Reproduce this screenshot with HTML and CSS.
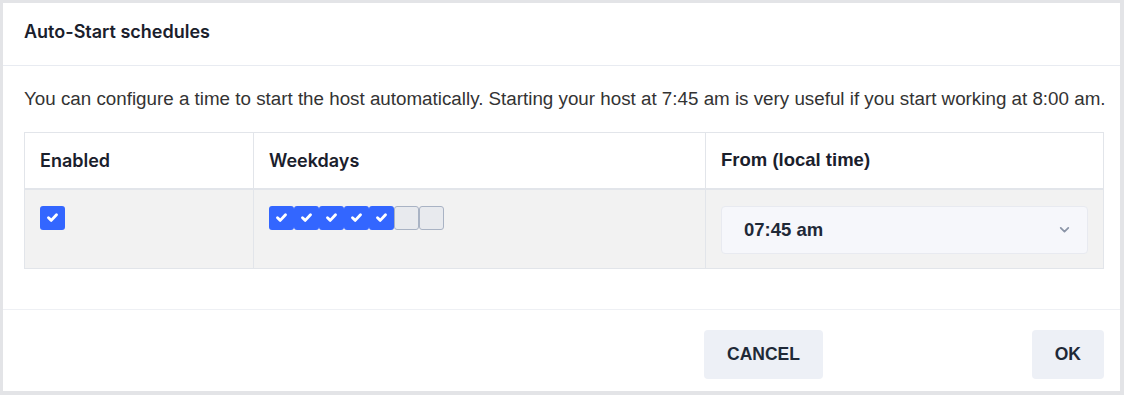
FILE: index.html
```html
<!DOCTYPE html>
<html lang="en">
<head>
    <meta charset="UTF-8">
    <meta name="viewport" content="width=device-width, initial-scale=1.0">
    <title>Auto-Start schedules</title>
    <link rel="stylesheet" href="styles.css">
</head>
<body>
    <div class="dialog">
        <div class="dialog-header">
            <h2>Auto-Start schedules</h2>
        </div>

        <div class="dialog-body">
            <p class="intro">You can configure a time to start the host automatically. Starting your host at 7:45 am is very useful if you start working at 8:00 am.</p>

            <table class="schedules">
                <thead>
                    <tr>
                        <th class="col-enabled">Enabled</th>
                        <th class="col-days">Weekdays</th>
                        <th class="col-from">From (local time)</th>
                    </tr>
                </thead>
                <tbody>
                    <tr>
                        <td>
                            <span class="check on">
                                <svg viewBox="0 0 12 12"><path d="M2.8 6.2 L5 8.3 L9.2 3.8" /></svg>
                            </span>
                        </td>
                        <td>
                            <div class="days">
                                <span class="check on"><svg viewBox="0 0 12 12"><path d="M2.8 6.2 L5 8.3 L9.2 3.8" /></svg></span>
                                <span class="check on"><svg viewBox="0 0 12 12"><path d="M2.8 6.2 L5 8.3 L9.2 3.8" /></svg></span>
                                <span class="check on"><svg viewBox="0 0 12 12"><path d="M2.8 6.2 L5 8.3 L9.2 3.8" /></svg></span>
                                <span class="check on"><svg viewBox="0 0 12 12"><path d="M2.8 6.2 L5 8.3 L9.2 3.8" /></svg></span>
                                <span class="check on"><svg viewBox="0 0 12 12"><path d="M2.8 6.2 L5 8.3 L9.2 3.8" /></svg></span>
                                <span class="check off"></span>
                                <span class="check off"></span>
                            </div>
                        </td>
                        <td>
                            <div class="time-select">
                                <span>07:45 am</span>
                                <svg class="chevron" viewBox="0 0 12 12"><path d="M2.5 4.5 L6 8 L9.5 4.5" /></svg>
                            </div>
                        </td>
                    </tr>
                </tbody>
            </table>
        </div>

        <div class="dialog-footer">
            <button class="btn">CANCEL</button>
            <button class="btn">OK</button>
        </div>
    </div>
</body>
</html>
```

FILE: styles.css
```css
* {
    margin: 0;
    padding: 0;
    box-sizing: border-box;
}

body {
    background-color: #e3e4e7;
    padding: 3px 4px 4px 3px;
    font-family: "Liberation Sans", Arial, sans-serif;
    color: #2d3748;
}

.dialog {
    background-color: #fff;
    height: 388px;
}

.dialog-header {
    height: 63px;
    padding: 0 21px;
    display: flex;
    align-items: center;
    border-bottom: 1px solid #e8ebf1;
}

.dialog-header h2 {
    font-family: Inter, "Liberation Sans", sans-serif;
    font-size: 18px;
    font-weight: 600;
    color: #1a202c;
    margin-top: -5px;
}

.dialog-body {
    padding: 23px 16px 40px 21px;
    border-bottom: 1px solid #eef0f4;
}

.intro {
    font-size: 18.8px;
    line-height: 20px;
    color: #333;
    margin-bottom: 23px;
    white-space: nowrap;
}

.schedules {
    width: 100%;
    border-collapse: collapse;
    border: 1px solid #e2e5ea;
}

.schedules th {
    height: 56px;
    text-align: left;
    padding: 0 15px;
    font-size: 18.5px;
    font-weight: 700;
    color: #1a202c;
    border-right: 1px solid #e2e5ea;
    border-bottom: 2px solid #e2e5ea;
    background-color: #fff;
}

.schedules .col-enabled,
.schedules .col-days {
    font-family: Inter, "Liberation Sans", sans-serif;
    font-weight: 600;
    font-size: 18px;
}

.col-enabled {
    width: 229px;
}

.col-days {
    width: 452px;
}

.schedules td {
    vertical-align: top;
    padding: 16px 15px 14px;
    background-color: #f2f2f2;
    border-right: 1px solid #e2e5ea;
}

.check {
    display: inline-flex;
    align-items: center;
    justify-content: center;
    width: 25px;
    height: 24px;
    border-radius: 3px;
}

.check.on {
    background-color: #3366ff;
}

.check.off {
    background-color: #e8eaee;
    border: 1.5px solid #a9b3c4;
}

.check svg {
    width: 15px;
    height: 15px;
    fill: none;
    stroke: #fff;
    stroke-width: 2.3;
    stroke-linecap: round;
    stroke-linejoin: round;
}

.days {
    display: flex;
}

.time-select {
    display: flex;
    align-items: center;
    justify-content: space-between;
    height: 48px;
    padding: 0 16px 0 22px;
    background-color: #f6f7fb;
    border: 1px solid #e8eaf0;
    border-radius: 4px;
    font-size: 18.5px;
    font-weight: 700;
    color: #1f2937;
}

.chevron {
    width: 13px;
    height: 13px;
    fill: none;
    stroke: #8a94a6;
    stroke-width: 1.6;
    stroke-linecap: round;
    stroke-linejoin: round;
}

.dialog-footer {
    display: flex;
    justify-content: space-between;
    padding: 20px 16px 0 701px;
}

.btn {
    height: 49px;
    padding: 0 23px;
    border: none;
    border-radius: 4px;
    background-color: #edf0f6;
    font-family: "Liberation Sans", Arial, sans-serif;
    font-size: 17.5px;
    font-weight: 700;
    color: #1f2937;
    cursor: pointer;
}
```
